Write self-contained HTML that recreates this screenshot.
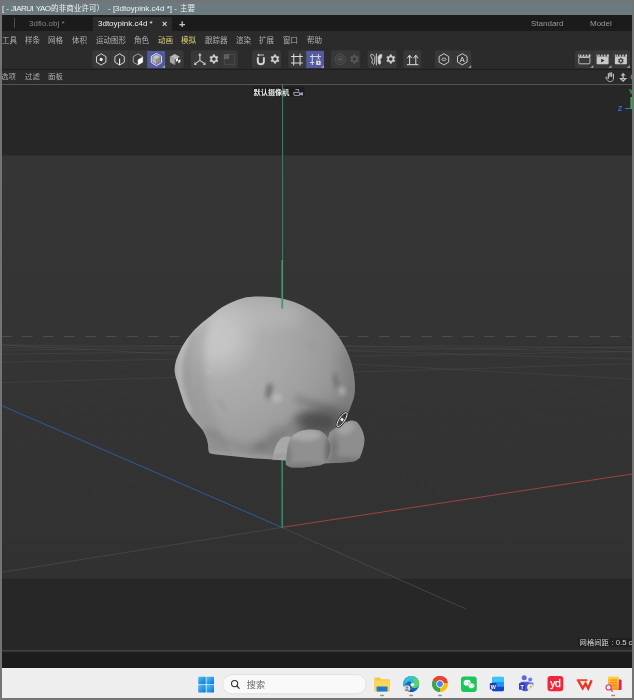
<!DOCTYPE html>
<html lang="zh">
<head>
<meta charset="utf-8">
<title>3dtoypink.c4d</title>
<style>
*{margin:0;padding:0;box-sizing:border-box}
html,body{width:634px;height:700px;overflow:hidden;background:#747474}
body{position:relative;font-family:"Liberation Sans","Noto Sans CJK SC",sans-serif;color:#c8c8c8}
#app{position:absolute;left:2px;top:2px;width:630px;height:696px;overflow:hidden;background:#2b2b2b}
.abs{position:absolute}
.t{position:absolute;white-space:nowrap;line-height:1}
.t,svg{will-change:transform}
#title{left:0;top:0;width:630px;height:13px;background:#6a7a7e}
#tabs{left:0;top:13px;width:630px;height:16px;background:#1b1b1b}
#menu{left:0;top:29px;width:630px;height:18px;background:#2b2b2b}
#menu .t{font-size:7.5px;top:6.2px;color:#b0b0b0}
#menu .y{color:#d9cf74}
#tool{left:0;top:47px;width:630px;height:20px;background:#2b2b2b}
.grp{position:absolute;top:1.5px;height:18px;background:#383838;border-radius:2.5px}
#sep1{left:0;top:67px;width:630px;height:1px;background:#1d1d1d}
#vmenu{left:0;top:68px;width:630px;height:14px;background:#2a2a2a}
#vmenu .t{font-size:7.4px;top:3.4px;color:#adadad}
#vline{left:0;top:82px;width:630px;height:1px;background:#545454}
#view{left:0;top:83px;width:630px;height:565px;background:#272727;overflow:hidden}
#vline2{left:0;top:648px;width:630px;height:3px;background:linear-gradient(#474747,#3a3a3a 35%,#232323 80%,#1c1c1c)}
#dark{left:0;top:651px;width:630px;height:15px;background:#1c1c1c}
#task{left:0;top:666px;width:630px;height:30px;background:#eeeeee}
</style>
</head>
<body>
<div id="app">
<div id="title" class="abs">
<span class="t" id="tt1" style="left:0px;top:2.5px;font-size:8px;letter-spacing:-0.52px;word-spacing:0.9px;color:#f2f2f2">[ - JIARUI YAO</span>
<span class="t" id="tt1b" style="left:48.7px;top:2.5px;font-size:7.6px;color:#f2f2f2">的非商业许可）</span>
<span class="t" id="tt2" style="left:105.5px;top:2.5px;font-size:8px;color:#f2f2f2">- [3dtoypink.c4d *] -</span>
<span class="t" id="tt3" style="left:178px;top:2.5px;font-size:7.6px;color:#f2f2f2">主要</span>
</div>
<div id="tabs" class="abs">
<div class="abs" style="left:12px;top:3px;width:1px;height:10px;background:#4a4a4a"></div>
<span class="t" id="tb1" style="left:27px;top:5.2px;font-size:8px;color:#858585">3dflo.obj *</span>
<div class="abs" style="left:91px;top:1.8px;width:79px;height:14.2px;background:#2b2b2b"></div>
<span class="t" id="tb2" style="left:96.3px;top:5.2px;font-size:8px;color:#f0f0f0">3dtoypink.c4d *</span>
<span class="t" id="tbx" style="left:159.6px;top:5px;font-size:9px;font-weight:bold;color:#dcdcdc">×</span>
<span class="t" id="tbp" style="left:176.8px;top:4px;font-size:11px;font-weight:bold;color:#c8c8c8">+</span>
<span class="t" id="tbs" style="left:528.6px;top:5.2px;font-size:8px;color:#9a9a9a">Standard</span>
<span class="t" id="tbm" style="left:588.2px;top:5.2px;font-size:8px;color:#9a9a9a">Model</span>
</div>
<div id="menu" class="abs">
<span class="t" style="left:0.0px">工具</span>
<span class="t" style="left:22.7px">样条</span>
<span class="t" style="left:46.3px">网格</span>
<span class="t" style="left:69.8px">体积</span>
<span class="t" style="left:93.7px">运动图形</span>
<span class="t" style="left:131.8px">角色</span>
<span class="t y" style="left:155.7px">动画</span>
<span class="t y" style="left:179.3px">模拟</span>
<span class="t" style="left:202.8px">跟踪器</span>
<span class="t" style="left:233.8px">渲染</span>
<span class="t" style="left:257.4px">扩展</span>
<span class="t" style="left:281.0px">窗口</span>
<span class="t" style="left:304.8px">帮助</span>
</div>
<div id="tool" class="abs"></div>
<svg class="abs" style="left:0;top:47px" width="630" height="20" viewBox="2 49 630 20">
<rect x="92.4" y="50.2" width="91.3" height="17.9" rx="2.5" fill="#383838"/>
<rect x="190.9" y="50.2" width="47.0" height="17.9" rx="2.5" fill="#383838"/>
<rect x="252.0" y="50.2" width="29.0" height="17.9" rx="2.5" fill="#383838"/>
<rect x="288.2" y="50.2" width="35.8" height="17.9" rx="2.5" fill="#383838"/>
<rect x="331.0" y="50.2" width="29.2" height="17.9" rx="2.5" fill="#383838"/>
<rect x="367.6" y="50.2" width="29.2" height="17.9" rx="2.5" fill="#383838"/>
<rect x="403.2" y="50.2" width="18.1" height="17.9" rx="2.5" fill="#383838"/>
<rect x="435.0" y="50.2" width="36.3" height="17.9" rx="2.5" fill="#383838"/>
<rect x="575.0" y="50.2" width="55.0" height="17.9" rx="2.5" fill="#383838"/>
<rect x="110.2" y="50.2" width="0.8" height="17.9" fill="#323232"/>
<rect x="128.4" y="50.2" width="0.8" height="17.9" fill="#323232"/>
<rect x="219.4" y="50.2" width="0.8" height="17.9" fill="#323232"/>
<rect x="452.7" y="50.2" width="0.8" height="17.9" fill="#323232"/>
<rect x="593.0" y="50.2" width="0.8" height="17.9" fill="#323232"/>
<rect x="611.2" y="50.2" width="0.8" height="17.9" fill="#323232"/>
<polygon points="101.20,53.80 105.90,56.60 105.90,62.20 101.20,65.00 96.50,62.20 96.50,56.60" fill="none" stroke="#d2d2d2" stroke-width="1.0" stroke-linejoin="round"/>
<circle cx="101.2" cy="59.4" r="1.55" fill="#f4f4f4"/>
<polygon points="119.60,53.80 124.30,56.60 124.30,62.20 119.60,65.00 114.90,62.20 114.90,56.60" fill="none" stroke="#d2d2d2" stroke-width="1.0" stroke-linejoin="round"/>
<line x1="119.6" y1="58.6" x2="119.6" y2="65.0" stroke="#f0f0f0" stroke-width="1.1"/>
<polygon points="138.00,53.80 142.70,56.60 142.70,62.20 138.00,65.00 133.30,62.20 133.30,56.60" fill="none" stroke="#a8a8a8" stroke-width="0.9" stroke-linejoin="round"/>
<polygon points="137.80,59.70 142.70,56.80 142.70,62.20 137.80,65.00" fill="#fafafa"/>
<rect x="147.2" y="51" width="17.9" height="17.2" fill="#545a9f"/>
<polygon points="156.40,53.30 161.50,56.40 161.50,62.60 156.40,65.70 151.30,62.60 151.30,56.40" fill="none" stroke="#f2f2f2" stroke-width="0.9" stroke-linejoin="round"/>
<polygon points="156.40,54.60 160.50,57.05 156.40,59.50 152.30,57.05" fill="#c4c4c4"/>
<polygon points="152.30,57.05 156.40,59.50 156.40,64.40 152.30,61.95" fill="#b4b4b4"/>
<polygon points="160.50,57.05 156.40,59.50 156.40,64.40 160.50,61.95" fill="#8c8c8c"/>
<polygon points="165.10,68.10 165.10,65.10 162.10,68.10" fill="#9c9cb0"/>
<polygon points="174.80,53.90 179.70,56.70 174.80,59.50 169.90,56.70" fill="#b9b9b9"/>
<polygon points="169.90,56.70 174.80,59.50 174.80,65.10 169.90,62.30" fill="#a9a9a9"/>
<polygon points="179.70,56.70 174.80,59.50 174.80,65.10 179.70,62.30" fill="#8d8d8d"/>
<polygon points="175.40,59.70 180.40,57.10 180.40,62.70 175.40,65.50" fill="#383838"/>
<polygon points="176.00,58.90 178.00,57.80 178.00,60.70 176.00,61.80" fill="#f2f2f2"/>
<polygon points="178.20,60.50 180.40,59.30 180.40,62.10 178.20,63.30" fill="#f2f2f2"/>
<g stroke="#d2d2d2" stroke-width="1.05" fill="none" stroke-linecap="round"><path d="M199.9 60.3 V54.7 M199.9 60.3 L195.3 63.7 M199.9 60.3 L204.5 63.7"/></g>
<polygon points="199.90,52.90 201.60,55.50 198.20,55.50" fill="#d2d2d2"/>
<polygon points="194.10,64.90 194.70,62.10 196.90,64.70" fill="#d2d2d2"/>
<polygon points="205.70,64.90 205.10,62.10 202.90,64.70" fill="#d2d2d2"/>
<polygon points="212.93,56.07 213.13,54.77 214.67,54.77 214.87,56.07 216.00,56.72 217.22,56.24 217.99,57.58 216.96,58.40 216.96,59.70 217.99,60.52 217.22,61.86 216.00,61.38 214.87,62.03 214.67,63.33 213.13,63.33 212.93,62.03 211.80,61.38 210.58,61.86 209.81,60.52 210.84,59.70 210.84,58.40 209.81,57.58 210.58,56.24 211.80,56.72" fill="#d2d2d2" stroke="#d2d2d2" stroke-width="0.5" stroke-linejoin="round"/><circle cx="213.90" cy="59.05" r="1.83" fill="#383838"/>
<rect x="224.3" y="54.6" width="10" height="9.8" fill="none" stroke="#4c4c4c" stroke-width="0.9"/>
<rect x="223.9" y="54.2" width="5.2" height="4.8" fill="#606060"/>
<path d="M257.8 57.2 V61.2 A3.05 3.05 0 0 0 263.9 61.2 V57.2" fill="none" stroke="#d2d2d2" stroke-width="1.9"/>
<path d="M258.4 55 H264.0" stroke="#d2d2d2" stroke-width="0.9"/>
<polygon points="257.20,55.00 259.20,53.60 259.20,56.40" fill="#d2d2d2"/>
<polygon points="274.03,56.07 274.23,54.77 275.77,54.77 275.97,56.07 277.10,56.72 278.32,56.24 279.09,57.58 278.06,58.40 278.06,59.70 279.09,60.52 278.32,61.86 277.10,61.38 275.97,62.03 275.77,63.33 274.23,63.33 274.03,62.03 272.90,61.38 271.68,61.86 270.91,60.52 271.94,59.70 271.94,58.40 270.91,57.58 271.68,56.24 272.90,56.72" fill="#d2d2d2" stroke="#d2d2d2" stroke-width="0.5" stroke-linejoin="round"/><circle cx="275.00" cy="59.05" r="1.83" fill="#383838"/>
<g stroke="#d8d8d8" stroke-width="1.05" fill="none"><path d="M293.7 53.8 V65.6 M300.1 53.8 V65.6 M291.0 56.5 H302.8 M291.0 62.9 H302.8"/></g>
<rect x="306.2" y="51" width="17.8" height="17.1" fill="#545a9f"/>
<g stroke="#d6d6d6" stroke-width="1.05" fill="none"><path d="M312.3 53.9 V64.9 M318.4 53.9 V58.8 M309.9 56.4 H320.9 M309.9 62.4 H314.2"/></g>
<rect x="316.1" y="60.9" width="4.6" height="4" rx="0.4" fill="#d8d8d8"/>
<path d="M317.2 60.9 V59.4 A1.2 1.2 0 0 1 319.6 59.4 V60.9" fill="none" stroke="#c4c4d4" stroke-width="0.7"/>
<rect x="318" y="62" width="0.9" height="1.8" fill="#545a9f"/>
<polygon points="324.00,68.10 324.00,65.10 321.00,68.10" fill="#9c9cb0"/>
<circle cx="340.2" cy="59.3" r="1.5" fill="#555" stroke="#555555" stroke-width="0.8"/>
<circle cx="340.2" cy="59.3" r="3.3" fill="none" stroke="#555555" stroke-width="0.8"/>
<circle cx="340.2" cy="59.3" r="5.3" fill="none" stroke="#555555" stroke-width="0.8"/>
<polygon points="353.43,56.07 353.63,54.77 355.17,54.77 355.37,56.07 356.50,56.72 357.72,56.24 358.49,57.58 357.46,58.40 357.46,59.70 358.49,60.52 357.72,61.86 356.50,61.38 355.37,62.03 355.17,63.33 353.63,63.33 353.43,62.03 352.30,61.38 351.08,61.86 350.31,60.52 351.34,59.70 351.34,58.40 350.31,57.58 351.08,56.24 352.30,56.72" fill="#585858" stroke="#585858" stroke-width="0.5" stroke-linejoin="round"/><circle cx="354.40" cy="59.05" r="1.83" fill="#383838"/>
<line x1="376.4" y1="53.4" x2="376.4" y2="65.4" stroke="#d2d2d2" stroke-width="0.9"/>
<path d="M374.8 56.6 C373.2 54.2,370.8 53.6,370.8 55 C370.8 57.4,372.0 59,373.0 59.6 C371.8 60.4,371.6 63.6,373.0 64.2 C374.2 64.8,374.8 62.5,374.8 60.2 Z" fill="none" stroke="#d2d2d2" stroke-width="0.9"/>
<path d="M378.0 56.6 C379.6 54.2,382.0 53.6,382.0 55 C382.0 57.4,380.8 59,379.8 59.6 C381.0 60.4,381.2 63.6,379.8 64.2 C378.6 64.8,378.0 62.5,378.0 60.2 Z" fill="#d2d2d2" stroke="#d2d2d2" stroke-width="0.6"/>
<polygon points="389.83,56.07 390.03,54.77 391.57,54.77 391.77,56.07 392.90,56.72 394.12,56.24 394.89,57.58 393.86,58.40 393.86,59.70 394.89,60.52 394.12,61.86 392.90,61.38 391.77,62.03 391.57,63.33 390.03,63.33 389.83,62.03 388.70,61.38 387.48,61.86 386.71,60.52 387.74,59.70 387.74,58.40 386.71,57.58 387.48,56.24 388.70,56.72" fill="#d2d2d2" stroke="#d2d2d2" stroke-width="0.5" stroke-linejoin="round"/><circle cx="390.80" cy="59.05" r="1.83" fill="#383838"/>
<path d="M409.6 64.4 V55.4 M407.3 58.2 L409.6 55.2 L411.9 58.2" fill="none" stroke="#dedede" stroke-width="1.0"/>
<path d="M415.8 64.4 V55.4 M413.5 58.2 L415.8 55.2 L418.1 58.2" fill="none" stroke="#dedede" stroke-width="1.0"/>
<path d="M406.9 64.7 H418.4" stroke="#dedede" stroke-width="1.0"/>
<polygon points="443.90,53.70 448.70,56.50 448.70,62.10 443.90,64.90 439.10,62.10 439.10,56.50" fill="none" stroke="#d8d8d8" stroke-width="0.9" stroke-linejoin="round"/>
<ellipse cx="443.9" cy="59.3" rx="2.2" ry="1.2" fill="none" stroke="#cfcfcf" stroke-width="0.8"/>
<polygon points="462.30,53.70 467.10,56.50 467.10,62.10 462.30,64.90 457.50,62.10 457.50,56.50" fill="none" stroke="#d8d8d8" stroke-width="0.9" stroke-linejoin="round"/>
<text x="462.3" y="62" font-size="7.4" text-anchor="middle" fill="#e2e2e2" font-family="Liberation Sans, sans-serif">A</text>
<polygon points="471.20,68.10 471.20,65.10 468.20,68.10" fill="#9a9a9a"/>
<path d="M578.7 54.4 V57.0 H589.9 V54.4" fill="none" stroke="#cdcdcd" stroke-width="0.9"/><rect x="579.9" y="54.6" width="1.5" height="2" fill="#cdcdcd"/><rect x="582.8" y="54.6" width="1.5" height="2" fill="#cdcdcd"/><rect x="585.7" y="54.6" width="1.5" height="2" fill="#cdcdcd"/><rect x="588.6" y="54.6" width="1.5" height="2" fill="#cdcdcd"/><rect x="578.8" y="57.4" width="11.1" height="6.4" rx="0.9" fill="none" stroke="#cdcdcd" stroke-width="0.9"/>
<polygon points="593.30,68.10 593.30,65.00 590.20,68.10" fill="#9a9a9a"/>
<path d="M597.0 54.4 V57.0 H608.2 V54.4" fill="none" stroke="#cdcdcd" stroke-width="0.9"/><rect x="598.2" y="54.6" width="1.5" height="2" fill="#cdcdcd"/><rect x="601.1" y="54.6" width="1.5" height="2" fill="#cdcdcd"/><rect x="604.0" y="54.6" width="1.5" height="2" fill="#cdcdcd"/><rect x="606.9" y="54.6" width="1.5" height="2" fill="#cdcdcd"/><rect x="596.6" y="57.0" width="12.0" height="7.2" rx="0.8" fill="#c9c9c9"/>
<polygon points="601.2,58.8 601.2,62.4 604.6,60.6" fill="#2f2f2f"/>
<polygon points="611.50,68.10 611.50,65.00 608.40,68.10" fill="#9a9a9a"/>
<path d="M615.3 54.4 V57.0 H626.5 V54.4" fill="none" stroke="#cdcdcd" stroke-width="0.9"/><rect x="616.5" y="54.6" width="1.5" height="2" fill="#cdcdcd"/><rect x="619.4" y="54.6" width="1.5" height="2" fill="#cdcdcd"/><rect x="622.3" y="54.6" width="1.5" height="2" fill="#cdcdcd"/><rect x="625.2" y="54.6" width="1.5" height="2" fill="#cdcdcd"/><rect x="614.9" y="57.0" width="12.0" height="7.2" rx="0.8" fill="#c9c9c9"/>
<polygon points="620.32,58.92 620.44,58.14 621.36,58.14 621.48,58.92 622.15,59.31 622.89,59.02 623.35,59.82 622.73,60.31 622.73,61.09 623.35,61.58 622.89,62.38 622.15,62.09 621.48,62.48 621.36,63.26 620.44,63.26 620.32,62.48 619.65,62.09 618.91,62.38 618.45,61.58 619.07,61.09 619.07,60.31 618.45,59.82 618.91,59.02 619.65,59.31" fill="#2f2f2f" stroke="#2f2f2f" stroke-width="0.5" stroke-linejoin="round"/><circle cx="620.90" cy="60.70" r="1.09" fill="#c9c9c9"/>
<polygon points="629.90,68.10 629.90,65.00 626.80,68.10" fill="#9a9a9a"/>
</svg>
<div id="sep1" class="abs"></div>
<div id="vmenu" class="abs">
<span class="t" style="left:-1px">选项</span><span class="t" style="left:22.5px">过滤</span><span class="t" style="left:46px">面板</span>
<svg class="abs" style="left:0;top:0" width="630" height="14" viewBox="2 70 630 14">
<g fill="none" stroke="#bcbcbc" stroke-width="0.95" stroke-linejoin="round" stroke-linecap="round">
<path d="M608.4 77.4 V73.6 M610 76.6 V72.7 M611.6 76.6 V72.7 M613.4 77.4 V74.2"/>
<path d="M613.5 74.4 V78.2 c0 2.2 -1.4 3.4 -3.2 3.4 c-1.4 0 -2.4 -0.6 -3.2 -1.8 l-1.5 -2.3 c0.7 -0.6 1.5 -0.3 2 0.4 l0.8 1 V73.8"/>
</g>
<path d="M609.2 72.8 h3 v3.4 h-3 Z" fill="#bcbcbc" opacity="0.6"/>
<g fill="#bcbcbc">
<polygon points="623.1,72.8 625.6,75.4 620.6,75.4"/>
<rect x="622.4" y="75" width="1.4" height="4"/>
<polygon points="619,77.9 627.2,77.9 623.1,81.9"/>
</g>
<circle cx="623.1" cy="79.3" r="0.6" fill="#2a2a2a"/>
<circle cx="633.4" cy="77" r="2.4" fill="none" stroke="#9a9a9a" stroke-width="0.9"/>
</svg>
</div>
<div id="vline" class="abs"></div>
<div id="view" class="abs">
<svg class="abs" style="left:0;top:0" width="630" height="565" viewBox="2 85 630 565">
<defs>
<linearGradient id="frameg" x1="0" y1="155.5" x2="0" y2="578.7" gradientUnits="userSpaceOnUse">
<stop offset="0" stop-color="#353535"/><stop offset="0.44" stop-color="#343434"/><stop offset="0.7" stop-color="#333333"/><stop offset="1" stop-color="#313131"/>
</linearGradient>
<radialGradient id="bodyg" cx="216" cy="336" r="152" gradientUnits="userSpaceOnUse">
<stop offset="0" stop-color="#c6c6c6"/><stop offset="0.12" stop-color="#c3c3c3"/><stop offset="0.3" stop-color="#adadad"/><stop offset="0.5" stop-color="#a6a6a6"/><stop offset="0.7" stop-color="#9d9d9d"/><stop offset="0.85" stop-color="#939393"/><stop offset="1" stop-color="#868686"/>
</radialGradient>
<linearGradient id="footg" x1="290" y1="430" x2="330" y2="468" gradientUnits="userSpaceOnUse">
<stop offset="0" stop-color="#aaaaaa"/><stop offset="0.5" stop-color="#929292"/><stop offset="1" stop-color="#6c6c6c"/>
</linearGradient>
<linearGradient id="foot2g" x1="335" y1="422" x2="364" y2="462" gradientUnits="userSpaceOnUse">
<stop offset="0" stop-color="#a6a6a6"/><stop offset="0.5" stop-color="#8e8e8e"/><stop offset="1" stop-color="#6a6a6a"/>
</linearGradient>
<filter id="b2" x="-50%" y="-50%" width="200%" height="200%"><feGaussianBlur stdDeviation="2"/></filter>
<filter id="b3" x="-50%" y="-50%" width="200%" height="200%"><feGaussianBlur stdDeviation="3.5"/></filter>
<filter id="b6" x="-50%" y="-50%" width="200%" height="200%"><feGaussianBlur stdDeviation="7"/></filter>
<filter id="b05" x="-20%" y="-20%" width="140%" height="140%"><feGaussianBlur stdDeviation="0.7"/></filter>
<clipPath id="bodyclip"><path id="bodyp" d="M282.0,298.6 C286.7,299.8 293.6,301.6 299.0,303.9 C304.4,306.2 309.4,309.1 314.2,312.4 C318.9,315.7 323.4,319.7 327.5,323.8 C331.6,327.9 335.7,332.6 338.8,337.0 C341.9,341.4 344.3,346.0 346.4,350.3 C348.4,354.6 349.9,358.7 351.1,362.6 C352.3,366.6 353.2,370.3 353.8,374.0 C354.4,377.7 354.8,381.3 354.9,385.0 C355.0,388.7 354.8,392.8 354.2,396.0 C353.6,399.2 352.5,401.7 351.5,404.5 C350.5,407.3 349.2,410.2 348.3,412.6 C347.4,415.1 347.8,414.6 346.4,419.2 C345.0,423.8 344.4,434.0 340.0,440.0 C335.6,446.0 328.0,451.6 320.0,455.0 C312.0,458.4 297.8,459.6 292.0,460.4 C286.2,461.2 288.8,459.8 285.0,459.6 C281.2,459.4 274.9,459.6 269.1,459.3 C263.3,459.0 256.5,458.5 250.2,458.0 C243.9,457.5 237.5,456.8 231.3,456.1 C225.1,455.4 216.8,454.8 213.0,454.0 C209.2,453.2 209.7,453.6 208.8,451.6 C207.9,449.6 208.6,445.4 207.6,441.9 C206.6,438.4 205.3,434.4 202.9,430.6 C200.5,426.8 196.2,423.0 193.4,419.2 C190.6,415.4 187.9,412.0 185.8,407.9 C183.8,403.8 182.5,398.8 181.1,394.6 C179.7,390.5 178.5,386.1 177.6,383.0 C176.7,379.9 175.9,378.2 175.4,376.0 C174.9,373.8 174.6,371.8 174.6,369.5 C174.6,367.2 175.0,364.9 175.6,362.5 C176.2,360.1 176.8,358.1 178.2,355.0 C179.6,351.9 181.7,347.3 183.9,343.7 C186.1,340.1 188.7,336.6 191.5,333.3 C194.3,330.0 197.8,326.7 201.0,323.8 C204.2,320.9 207.2,318.7 210.4,316.2 C213.6,313.7 216.4,311.0 219.9,308.7 C223.4,306.4 226.8,304.3 231.2,302.4 C235.6,300.5 241.7,298.3 246.4,297.3 C251.1,296.3 255.5,296.4 259.6,296.4 C263.7,296.3 267.3,296.6 271.0,297.0 C274.7,297.4 277.3,297.5 282.0,298.6 Z"/></clipPath>
<clipPath id="viewclip"><rect x="2" y="85" width="630" height="565"/></clipPath>
<clipPath id="gridclip"><polygon points="2,344.2 632,345.8 632,650 2,650"/></clipPath>
<clipPath id="frameclip"><rect x="2" y="155.5" width="630" height="423.2"/></clipPath>
</defs>
<rect x="2" y="85" width="630" height="565" fill="#272727"/>
<rect x="2" y="155.5" width="630" height="423.2" fill="url(#frameg)"/>
<line x1="1.1" y1="336.4" x2="634" y2="336.4" stroke="#545454" stroke-width="0.9" stroke-dasharray="10.5 10.5"/>
<g clip-path="url(#gridclip)" stroke="#8a8a8a" stroke-width="0.8" fill="none">
<line x1="-117.5" y1="386.3" x2="1090.1" y2="349.8" stroke-opacity="0.170"/>
<line x1="1228.6" y1="411.3" x2="-8.7" y2="344.4" stroke-opacity="0.170"/>
<line x1="-134.8" y1="364.4" x2="873.2" y2="347.5" stroke-opacity="0.170"/>
<line x1="1356.2" y1="380.0" x2="101.3" y2="343.8" stroke-opacity="0.170"/>
<line x1="-141.6" y1="355.8" x2="720.5" y2="345.8" stroke-opacity="0.170"/>
<line x1="1408.6" y1="367.2" x2="196.7" y2="343.3" stroke-opacity="0.170"/>
<line x1="-145.2" y1="351.3" x2="607.3" y2="344.6" stroke-opacity="0.170"/>
<line x1="1437.1" y1="360.2" x2="280.1" y2="342.9" stroke-opacity="0.170"/>
<line x1="-147.4" y1="348.5" x2="519.9" y2="343.7" stroke-opacity="0.170"/>
<line x1="1455.1" y1="355.8" x2="353.8" y2="342.5" stroke-opacity="0.170"/>
<line x1="-149.0" y1="346.5" x2="450.5" y2="342.9" stroke-opacity="0.170"/>
<line x1="-150.1" y1="345.1" x2="394.0" y2="342.3" stroke-opacity="0.170"/>
<line x1="-23.1" y1="505.4" x2="1381.6" y2="352.9" stroke-opacity="0.030"/>
<line x1="671.6" y1="547.9" x2="-123.3" y2="345.0" stroke-opacity="0.030"/>
<line x1="-51.2" y1="470.0" x2="1342.7" y2="352.5" stroke-opacity="0.030"/>
<line x1="816.9" y1="512.3" x2="-109.7" y2="344.9" stroke-opacity="0.030"/>
<line x1="-69.5" y1="446.8" x2="1305.6" y2="352.1" stroke-opacity="0.030"/>
<line x1="920.4" y1="486.9" x2="-96.4" y2="344.9" stroke-opacity="0.030"/>
<line x1="-82.5" y1="430.5" x2="1270.4" y2="351.7" stroke-opacity="0.030"/>
<line x1="997.7" y1="467.9" x2="-83.2" y2="344.8" stroke-opacity="0.030"/>
<line x1="-92.1" y1="418.4" x2="1236.8" y2="351.4" stroke-opacity="0.030"/>
<line x1="1057.7" y1="453.2" x2="-70.3" y2="344.7" stroke-opacity="0.030"/>
<line x1="-99.5" y1="409.0" x2="1204.8" y2="351.0" stroke-opacity="0.030"/>
<line x1="1105.7" y1="441.5" x2="-57.6" y2="344.7" stroke-opacity="0.030"/>
<line x1="-105.4" y1="401.6" x2="1174.1" y2="350.7" stroke-opacity="0.030"/>
<line x1="1144.8" y1="431.9" x2="-45.1" y2="344.6" stroke-opacity="0.030"/>
<line x1="-110.1" y1="395.5" x2="1144.9" y2="350.4" stroke-opacity="0.030"/>
<line x1="1177.4" y1="423.9" x2="-32.8" y2="344.5" stroke-opacity="0.030"/>
<line x1="-114.1" y1="390.5" x2="1116.9" y2="350.1" stroke-opacity="0.030"/>
<line x1="1205.0" y1="417.1" x2="-20.7" y2="344.5" stroke-opacity="0.030"/>
<line x1="-120.4" y1="382.6" x2="1064.3" y2="349.5" stroke-opacity="0.030"/>
<line x1="1249.1" y1="406.3" x2="3.0" y2="344.4" stroke-opacity="0.030"/>
<line x1="-122.8" y1="379.5" x2="1039.7" y2="349.3" stroke-opacity="0.030"/>
<line x1="1266.9" y1="401.9" x2="14.6" y2="344.3" stroke-opacity="0.030"/>
<line x1="-125.0" y1="376.8" x2="1016.0" y2="349.0" stroke-opacity="0.030"/>
<line x1="1282.7" y1="398.0" x2="26.0" y2="344.2" stroke-opacity="0.030"/>
<line x1="-126.9" y1="374.4" x2="993.2" y2="348.8" stroke-opacity="0.030"/>
<line x1="1296.7" y1="394.6" x2="37.2" y2="344.2" stroke-opacity="0.030"/>
<line x1="-128.6" y1="372.2" x2="971.3" y2="348.5" stroke-opacity="0.030"/>
<line x1="1309.3" y1="391.5" x2="48.3" y2="344.1" stroke-opacity="0.030"/>
<line x1="-130.1" y1="370.3" x2="950.2" y2="348.3" stroke-opacity="0.030"/>
<line x1="1320.5" y1="388.8" x2="59.2" y2="344.1" stroke-opacity="0.030"/>
<line x1="-131.5" y1="368.6" x2="929.9" y2="348.1" stroke-opacity="0.030"/>
<line x1="1330.7" y1="386.3" x2="70.0" y2="344.0" stroke-opacity="0.030"/>
<line x1="-132.7" y1="367.1" x2="910.3" y2="347.9" stroke-opacity="0.030"/>
<line x1="1340.0" y1="384.0" x2="80.6" y2="344.0" stroke-opacity="0.030"/>
<line x1="-133.8" y1="365.6" x2="891.4" y2="347.7" stroke-opacity="0.030"/>
<line x1="1348.5" y1="381.9" x2="91.0" y2="343.9" stroke-opacity="0.030"/>
<line x1="-135.8" y1="363.2" x2="855.5" y2="347.3" stroke-opacity="0.030"/>
<line x1="1363.3" y1="378.3" x2="111.4" y2="343.8" stroke-opacity="0.030"/>
<line x1="-136.6" y1="362.1" x2="838.5" y2="347.1" stroke-opacity="0.030"/>
<line x1="1369.9" y1="376.6" x2="121.4" y2="343.7" stroke-opacity="0.030"/>
<line x1="-137.4" y1="361.1" x2="822.1" y2="346.9" stroke-opacity="0.030"/>
<line x1="1376.0" y1="375.2" x2="131.3" y2="343.7" stroke-opacity="0.030"/>
<line x1="-138.2" y1="360.2" x2="806.1" y2="346.8" stroke-opacity="0.030"/>
<line x1="1381.7" y1="373.8" x2="141.0" y2="343.6" stroke-opacity="0.030"/>
<line x1="-138.8" y1="359.3" x2="790.7" y2="346.6" stroke-opacity="0.030"/>
<line x1="1386.9" y1="372.5" x2="150.6" y2="343.6" stroke-opacity="0.030"/>
<line x1="-139.5" y1="358.5" x2="775.8" y2="346.4" stroke-opacity="0.030"/>
<line x1="1391.8" y1="371.3" x2="160.1" y2="343.5" stroke-opacity="0.030"/>
<line x1="-140.1" y1="357.8" x2="761.3" y2="346.3" stroke-opacity="0.030"/>
<line x1="1396.4" y1="370.1" x2="169.4" y2="343.5" stroke-opacity="0.030"/>
<line x1="-140.6" y1="357.1" x2="747.3" y2="346.1" stroke-opacity="0.030"/>
<line x1="1400.7" y1="369.1" x2="178.6" y2="343.4" stroke-opacity="0.030"/>
<line x1="-141.1" y1="356.4" x2="733.7" y2="346.0" stroke-opacity="0.030"/>
<line x1="1404.8" y1="368.1" x2="187.7" y2="343.4" stroke-opacity="0.030"/>
<line x1="-142.1" y1="355.3" x2="707.7" y2="345.7" stroke-opacity="0.030"/>
<line x1="1412.2" y1="366.3" x2="205.5" y2="343.3" stroke-opacity="0.030"/>
<line x1="-142.5" y1="354.7" x2="695.3" y2="345.6" stroke-opacity="0.030"/>
<line x1="1415.6" y1="365.4" x2="214.2" y2="343.3" stroke-opacity="0.030"/>
<line x1="-142.9" y1="354.2" x2="683.2" y2="345.4" stroke-opacity="0.030"/>
<line x1="1418.8" y1="364.7" x2="222.9" y2="343.2" stroke-opacity="0.030"/>
<line x1="-143.3" y1="353.7" x2="671.4" y2="345.3" stroke-opacity="0.030"/>
<line x1="1421.8" y1="363.9" x2="231.4" y2="343.2" stroke-opacity="0.030"/>
<line x1="-143.6" y1="353.3" x2="660.0" y2="345.2" stroke-opacity="0.030"/>
<line x1="1424.7" y1="363.2" x2="239.7" y2="343.1" stroke-opacity="0.030"/>
<line x1="-144.0" y1="352.8" x2="648.9" y2="345.1" stroke-opacity="0.030"/>
<line x1="1427.4" y1="362.5" x2="248.0" y2="343.1" stroke-opacity="0.030"/>
<line x1="-144.3" y1="352.4" x2="638.1" y2="344.9" stroke-opacity="0.030"/>
<line x1="1430.0" y1="361.9" x2="256.2" y2="343.0" stroke-opacity="0.030"/>
<line x1="-144.6" y1="352.0" x2="627.5" y2="344.8" stroke-opacity="0.030"/>
<line x1="1432.5" y1="361.3" x2="264.3" y2="343.0" stroke-opacity="0.030"/>
<line x1="-144.9" y1="351.6" x2="617.3" y2="344.7" stroke-opacity="0.030"/>
<line x1="1434.9" y1="360.7" x2="272.3" y2="343.0" stroke-opacity="0.030"/>
<line x1="-145.5" y1="350.9" x2="597.6" y2="344.5" stroke-opacity="0.030"/>
<line x1="1439.3" y1="359.6" x2="287.9" y2="342.9" stroke-opacity="0.030"/>
<line x1="-145.7" y1="350.6" x2="588.1" y2="344.4" stroke-opacity="0.030"/>
<line x1="1441.4" y1="359.1" x2="295.6" y2="342.8" stroke-opacity="0.030"/>
<line x1="-146.0" y1="350.3" x2="578.8" y2="344.3" stroke-opacity="0.030"/>
<line x1="1443.3" y1="358.6" x2="303.2" y2="342.8" stroke-opacity="0.030"/>
<line x1="-146.2" y1="350.0" x2="569.8" y2="344.2" stroke-opacity="0.030"/>
<line x1="1445.2" y1="358.2" x2="310.7" y2="342.8" stroke-opacity="0.030"/>
<line x1="-146.4" y1="349.7" x2="561.0" y2="344.1" stroke-opacity="0.030"/>
<line x1="1447.0" y1="357.7" x2="318.1" y2="342.7" stroke-opacity="0.030"/>
<line x1="-146.7" y1="349.5" x2="552.4" y2="344.0" stroke-opacity="0.030"/>
<line x1="1448.8" y1="357.3" x2="325.4" y2="342.7" stroke-opacity="0.030"/>
<line x1="-146.9" y1="349.2" x2="544.0" y2="343.9" stroke-opacity="0.030"/>
<line x1="1450.5" y1="356.9" x2="332.6" y2="342.6" stroke-opacity="0.030"/>
<line x1="-147.1" y1="348.9" x2="535.8" y2="343.8" stroke-opacity="0.030"/>
<line x1="1452.1" y1="356.5" x2="339.8" y2="342.6" stroke-opacity="0.030"/>
<line x1="-147.3" y1="348.7" x2="527.8" y2="343.8" stroke-opacity="0.030"/>
<line x1="1453.6" y1="356.1" x2="346.8" y2="342.6" stroke-opacity="0.030"/>
<line x1="-147.6" y1="348.2" x2="512.3" y2="343.6" stroke-opacity="0.030"/>
<line x1="1456.5" y1="355.4" x2="360.7" y2="342.5" stroke-opacity="0.030"/>
<line x1="-147.8" y1="348.0" x2="504.8" y2="343.5" stroke-opacity="0.030"/>
<line x1="1457.9" y1="355.1" x2="367.5" y2="342.5" stroke-opacity="0.030"/>
<line x1="-148.0" y1="347.8" x2="497.5" y2="343.4" stroke-opacity="0.030"/>
<line x1="1459.3" y1="354.7" x2="374.2" y2="342.4" stroke-opacity="0.030"/>
<line x1="-148.1" y1="347.6" x2="490.3" y2="343.4" stroke-opacity="0.030"/>
<line x1="1460.5" y1="354.4" x2="380.9" y2="342.4" stroke-opacity="0.030"/>
<line x1="-148.3" y1="347.4" x2="483.3" y2="343.3" stroke-opacity="0.030"/>
<line x1="1461.8" y1="354.1" x2="387.5" y2="342.4" stroke-opacity="0.030"/>
<line x1="-148.4" y1="347.2" x2="476.5" y2="343.2" stroke-opacity="0.030"/>
<line x1="1463.0" y1="353.8" x2="394.0" y2="342.3" stroke-opacity="0.030"/>
<line x1="-148.6" y1="347.1" x2="469.8" y2="343.1" stroke-opacity="0.030"/>
<line x1="-148.7" y1="346.9" x2="463.2" y2="343.1" stroke-opacity="0.030"/>
<line x1="-148.8" y1="346.7" x2="456.8" y2="343.0" stroke-opacity="0.030"/>
<line x1="-149.1" y1="346.4" x2="444.3" y2="342.9" stroke-opacity="0.030"/>
<line x1="-149.2" y1="346.2" x2="438.3" y2="342.8" stroke-opacity="0.030"/>
<line x1="-149.3" y1="346.1" x2="432.4" y2="342.7" stroke-opacity="0.030"/>
<line x1="-149.4" y1="345.9" x2="426.6" y2="342.7" stroke-opacity="0.030"/>
<line x1="-149.6" y1="345.8" x2="420.9" y2="342.6" stroke-opacity="0.030"/>
<line x1="-149.7" y1="345.7" x2="415.3" y2="342.6" stroke-opacity="0.030"/>
<line x1="-149.8" y1="345.5" x2="409.8" y2="342.5" stroke-opacity="0.030"/>
<line x1="-149.9" y1="345.4" x2="404.4" y2="342.4" stroke-opacity="0.030"/>
<line x1="-150.0" y1="345.3" x2="399.2" y2="342.4" stroke-opacity="0.030"/>
</g>
<line x1="281.8" y1="527.4" x2="2" y2="572.3" stroke="#4c4848" stroke-width="0.8"/>
<line x1="281.8" y1="527.4" x2="466" y2="609" stroke="#4c4c4c" stroke-width="0.8"/>
<line x1="281.8" y1="527.4" x2="2" y2="405.7" stroke="#2d5b9f" stroke-width="1"/>
<line x1="281.8" y1="527.4" x2="632" y2="474" stroke="#9e4242" stroke-width="1"/>
<line x1="282.6" y1="85" x2="282.6" y2="262" stroke="#2f8f63" stroke-width="1"/><rect x="281.3" y="460" width="1.8" height="67.8" fill="#2f8658"/>
<g filter="url(#b05)">
<use href="#bodyp" fill="url(#bodyg)"/>
<g clip-path="url(#bodyclip)">
<ellipse cx="351" cy="378" rx="10" ry="46" fill="#707070" opacity="0.45" filter="url(#b6)"/>
<ellipse cx="322" cy="426" rx="27" ry="17" fill="#505050" opacity="0.7" filter="url(#b6)" transform="rotate(-20 322 426)"/>
<ellipse cx="274" cy="448" rx="20" ry="7" fill="#767676" opacity="0.45" filter="url(#b3)"/>
<path d="M212,312 C204,330 203,352 204,374 C206,396 212,414 222,428 L204,430 C194,418 187,404 184,388 C181,370 184,350 192,334 Z" fill="#8f8f8f" opacity="0.42" filter="url(#b3)"/>
<path d="M194,331 C188,344 186,360 186.5,374 C187,390 191,404 198,418" fill="none" stroke="#8a8a8a" stroke-width="1.6" opacity="0.5" filter="url(#b2)"/>
<path d="M188,336 C181,350 178.5,362 179,374 C180,388 184,400 190,412" fill="none" stroke="#d0d0d0" stroke-width="3.5" opacity="0.45" filter="url(#b2)"/>
<ellipse cx="209.5" cy="372" rx="2.4" ry="3.2" fill="#cccccc" opacity="0.35" filter="url(#b2)"/>
<path d="M218,399 L226,411" fill="none" stroke="#8c8c8c" stroke-width="2" opacity="0.6" filter="url(#b2)"/>
<path d="M203,428 C207,436 208.5,444 209,452 L232,455 C228,446 224,438 218,430 Z" fill="#8a8a8a" opacity="0.5" filter="url(#b2)"/>
<path d="M210,452.5 L250,457 L285,458.6" fill="none" stroke="#b4b4b4" stroke-width="2" opacity="0.6" filter="url(#b2)"/>
<ellipse cx="316" cy="421" rx="20" ry="9" fill="#444" opacity="0.65" filter="url(#b3)" transform="rotate(8 316 421)"/>
<ellipse cx="278" cy="438" rx="11" ry="12" fill="#7a7a7a" opacity="0.4" filter="url(#b3)"/>
<ellipse cx="264" cy="316" rx="40" ry="13" fill="#c2c2c2" opacity="0.4" filter="url(#b6)"/>
<path d="M302,416 C288,431 272,442 252,448" fill="none" stroke="#6c6c6c" stroke-width="6" opacity="0.5" filter="url(#b3)"/>
<path d="M205,430 C219,441 238,447 258,450" fill="none" stroke="#7a7a7a" stroke-width="7" opacity="0.45" filter="url(#b3)"/>
<ellipse cx="269" cy="391" rx="3" ry="8" fill="#666" opacity="0.8" filter="url(#b2)" transform="rotate(12 269 391)"/>
<ellipse cx="277" cy="398" rx="5" ry="4.5" fill="#c2c2c2" opacity="0.6" filter="url(#b2)"/>
<ellipse cx="336" cy="381" rx="2.4" ry="8" fill="#6c6c6c" opacity="0.75" filter="url(#b2)" transform="rotate(-14 336 381)"/>
<ellipse cx="342" cy="391" rx="3.5" ry="5" fill="#b8b8b8" opacity="0.7" filter="url(#b2)"/>
<ellipse cx="312" cy="346" rx="5" ry="3.5" fill="#969696" opacity="0.45" filter="url(#b2)" transform="rotate(35 312 346)"/>
<path d="M296,398 C310,404 326,408 344,414" fill="none" stroke="#5a5a5a" stroke-width="5" opacity="0.55" filter="url(#b3)"/>
<ellipse cx="262" cy="447" rx="4" ry="2.5" fill="#777" opacity="0.6" filter="url(#b2)"/>
</g>
<clipPath id="rfclip"><path d="M329.4,432.5 C333,429 337,426.6 340.7,424.9 C344,423 347,421.6 350.2,420.7 C352.6,420.4 355,421 356.8,422 C358.8,424 360.4,426.2 361.5,428.7 C363,431.6 364,434.8 364.4,438.1 C364.6,441.4 364.2,444.6 363.4,447.6 C362.4,451.4 361.2,455 359.6,458 C357.6,460 355,461.2 352.1,461.8 L340.7,462.7 L322,463.4 Z"/></clipPath>
<path d="M329.4,432.5 C333,429 337,426.6 340.7,424.9 C344,423 347,421.6 350.2,420.7 C352.6,420.4 355,421 356.8,422 C358.8,424 360.4,426.2 361.5,428.7 C363,431.6 364,434.8 364.4,438.1 C364.6,441.4 364.2,444.6 363.4,447.6 C362.4,451.4 361.2,455 359.6,458 C357.6,460 355,461.2 352.1,461.8 L340.7,462.7 L322,463.4 Z" fill="#8e8e8e"/>
<g clip-path="url(#rfclip)">
<ellipse cx="346" cy="428" rx="9" ry="6" fill="#a8a8a8" opacity="0.8" filter="url(#b2)" transform="rotate(-25 346 428)"/>
<ellipse cx="345" cy="461" rx="18" ry="4.5" fill="#6a6a6a" opacity="0.6" filter="url(#b2)"/>
<ellipse cx="334" cy="448" rx="4" ry="11" fill="#626262" opacity="0.5" filter="url(#b2)"/>
</g>
<path d="M272.5,459.4 C273.5,451 276,443 281,438.4 C285,435.6 290,436 292,438 L292,461 Z" fill="#a8a8a8"/><path d="M273,459 C276,456 282,455 290,456" fill="none" stroke="#8a8a8a" stroke-width="3" opacity="0.6" filter="url(#b2)"/>
<clipPath id="ffclip"><path d="M287.7,445.7 C288.4,443 289.4,440.4 290.6,438.1 C292.4,435.8 294.6,434 297.2,432.5 C300.8,431 304.6,430 308.5,429.6 C312.4,429.4 316.2,429.8 319.9,430.6 C322.6,432 324.8,433.8 326.5,436.2 C328.4,439.2 329.6,442.4 330.3,445.7 C330.6,448.6 330.2,451.6 329.4,454.2 C328.6,457.4 327.4,460.2 325.6,462.7 C323.4,464.2 320.8,465.2 318,465.6 L302.9,467.5 L291.5,467.5 C289.2,467 287.2,466 285.8,464.6 C285.6,460.8 286,457 286.8,453.3 Z"/></clipPath>
<path d="M287.7,445.7 C288.4,443 289.4,440.4 290.6,438.1 C292.4,435.8 294.6,434 297.2,432.5 C300.8,431 304.6,430 308.5,429.6 C312.4,429.4 316.2,429.8 319.9,430.6 C322.6,432 324.8,433.8 326.5,436.2 C328.4,439.2 329.6,442.4 330.3,445.7 C330.6,448.6 330.2,451.6 329.4,454.2 C328.6,457.4 327.4,460.2 325.6,462.7 C323.4,464.2 320.8,465.2 318,465.6 L302.9,467.5 L291.5,467.5 C289.2,467 287.2,466 285.8,464.6 C285.6,460.8 286,457 286.8,453.3 Z" fill="#909090"/>
<g clip-path="url(#ffclip)">
<ellipse cx="305" cy="435" rx="16" ry="6" fill="#b0b0b0" opacity="0.8" filter="url(#b2)"/>
<ellipse cx="330" cy="451" rx="5" ry="14" fill="#5c5c5c" opacity="0.7" filter="url(#b2)"/>
<ellipse cx="305" cy="467" rx="20" ry="4" fill="#707070" opacity="0.6" filter="url(#b2)"/>
<ellipse cx="288" cy="455" rx="3" ry="10" fill="#707070" opacity="0.6" filter="url(#b2)"/>
</g>
</g>
<rect x="281.4" y="260" width="1.7" height="48.7" fill="#3a9c6b"/>
<g transform="rotate(33.7 342 419.6)"><ellipse cx="342" cy="419.6" rx="2.7" ry="8.2" fill="#4a4a4a" stroke="#222" stroke-width="2"/><ellipse cx="342" cy="419.6" rx="2.7" ry="8.2" fill="none" stroke="#f6f6f6" stroke-width="0.9"/><circle cx="342" cy="419.6" r="1.5" fill="#f2f2f2"/><path d="M342 412.5 L342 417" stroke="#222" stroke-width="1"/></g>
<rect x="252.6" y="86.4" width="52" height="10.2" rx="1" fill="#1c1c1c" opacity="0.85"/>
<line x1="282.6" y1="85" x2="282.6" y2="98" stroke="#2f8f63" stroke-width="1"/>
<text x="253.6" y="94.6" font-size="7.15" font-weight="bold" fill="#ececec" font-family="Liberation Sans, Noto Sans CJK SC, sans-serif">默认摄像机</text>
<g fill="none" stroke="#a9afc4" stroke-width="0.9"><path d="M295.4 89.6 H298.6 V91.4 M293.6 92.4 H299.6 V95.4 H294.2 Z"/><path d="M299.8 94 L302.4 92.6 V95.2 Z" fill="#a9afc4"/></g>
<text x="628.8" y="93.6" font-size="7" font-weight="bold" fill="#2fae4f" font-family="Liberation Sans, sans-serif">Y</text>
<rect x="630.4" y="97" width="1.8" height="12" fill="#2fae4f"/>
<text x="617.8" y="111" font-size="7.6" font-weight="bold" fill="#2f74d0" font-family="Liberation Sans, sans-serif">Z</text>
<rect x="625" y="108" width="6" height="1" fill="#2f74d0"/>
<rect x="578.4" y="638" width="54" height="8.8" fill="#1c1c1c" opacity="0.7"/>
<text id="gridtxt" x="579.6" y="645.2" font-size="7.3" fill="#d6d6d6" font-family="Liberation Sans, Noto Sans CJK SC, sans-serif">网格间距<tspan id="gridtxt2" font-size="7.7" dx="0.6"> : 0.5 cm</tspan></text>
</svg>
</div>
<div id="vline2" class="abs"></div>
<div id="dark" class="abs"></div>
<div id="task" class="abs">
<svg class="abs" style="left:0;top:0" width="630" height="30" viewBox="2 668 630 30">
<defs>
<linearGradient id="wing" x1="0" y1="0" x2="1" y2="1"><stop offset="0" stop-color="#4fc3f7"/><stop offset="1" stop-color="#0a74d8"/></linearGradient>
<linearGradient id="edgeg" x1="0" y1="0" x2="1" y2="1"><stop offset="0" stop-color="#35c1b1"/><stop offset="0.5" stop-color="#1b9de2"/><stop offset="1" stop-color="#0c59a4"/></linearGradient>
<linearGradient id="wordg" x1="0" y1="0" x2="0" y2="1"><stop offset="0" stop-color="#4fb3f2"/><stop offset="0.5" stop-color="#2b7cd3"/><stop offset="1" stop-color="#1756b0"/></linearGradient>
<linearGradient id="docg" x1="0" y1="0" x2="0" y2="1"><stop offset="0" stop-color="#ffd43a"/><stop offset="1" stop-color="#f7941d"/></linearGradient>
</defs>
<rect x="198.2" y="676.7" width="7.5" height="7.5" rx="0.6" fill="url(#wing)"/>
<rect x="206.5" y="676.7" width="7.5" height="7.5" rx="0.6" fill="url(#wing)"/>
<rect x="198.2" y="685.0" width="7.5" height="7.5" rx="0.6" fill="url(#wing)"/>
<rect x="206.5" y="685.0" width="7.5" height="7.5" rx="0.6" fill="url(#wing)"/>
<rect x="222.6" y="674.6" width="143.6" height="19.2" rx="9.6" fill="#f9f9f9" stroke="#dcdcdc" stroke-width="0.8"/>
<circle cx="234.6" cy="683.6" r="3.1" fill="none" stroke="#333" stroke-width="1.1"/><line x1="236.9" y1="686" x2="239.2" y2="688.4" stroke="#333" stroke-width="1.2" stroke-linecap="round"/>
<text x="246.8" y="687.8" font-size="9.2" fill="#6a6a6a" font-family="Liberation Sans, Noto Sans CJK SC, sans-serif">搜索</text>
<path d="M374.4 678.6 a1 1 0 0 1 1-1 h4.2 l1.6 1.6 h7.6 a1 1 0 0 1 1 1 v10.4 a1 1 0 0 1 -1 1 h-13.4 a1 1 0 0 1 -1-1 Z" fill="#f8c63d"/>
<rect x="374.4" y="680.4" width="15.4" height="11.2" rx="1" fill="#fbd65a"/>
<rect x="376.6" y="686.4" width="11" height="5.2" rx="0.8" fill="#1a7bd4"/>
<clipPath id="edgeclip"><circle cx="411.2" cy="684" r="8"/></clipPath>
<g clip-path="url(#edgeclip)">
<rect x="403" y="676" width="17" height="17" fill="#1565b8"/>
<path d="M403 686 C403 679 408 675.6 412.4 675.8 C417 676 419.6 680 419.4 683.4 C419.2 686.6 416.8 688 414.4 688 C412 688 411 686.6 411.6 685 C412.4 683 411 681.4 409 681.6 C406 682 404.4 684.4 404.6 688 Z" fill="#2fb3e6"/>
<path d="M411 675.8 C416.6 675.6 419.8 680 419.4 683.6 C419.2 686.6 416.8 688 414.4 688 C412.6 688 411.4 687.2 411.4 685.8 C413.6 685 414.4 683 413.6 681 C412.8 678.8 411 677.6 408.6 677.6 C409.2 676.4 410 676 411 675.8 Z" fill="#55d468"/>
<path d="M410.6 676 C414 676 416.6 677.6 417.8 680 C415.8 678.4 412.6 678 410 679.2 C408 680.2 406.8 682 406.6 684 C405 682 405.6 677.4 410.6 676 Z" fill="#36c3d8" opacity="0.9"/>
<ellipse cx="412.4" cy="684.6" rx="1.9" ry="1.7" fill="#f4f8fb"/>
<path d="M404 688 C406 692 412 693.4 417 690 C414 691.4 410 690.6 408 688 Z" fill="#0d4f9a"/>
</g>
<circle cx="407" cy="688.6" r="3.3" fill="#dcdcdc"/><circle cx="407" cy="687.5" r="1.25" fill="#8c8c8c"/><path d="M404.8 690.9 a2.2 1.9 0 0 1 4.4 0 Z" fill="#8c8c8c"/>
<circle cx="440" cy="684" r="8" fill="#fbbc05"/>
<path d="M433.07 680.00 A8 8 0 0 1 446.93 680.00 L440 684 Z" fill="#ea4335"/>
<path d="M433.07 680.00 A8 8 0 0 0 440.00 692.00 L440 684 Z" fill="#34a853"/>
<path d="M433.07 680.00 A8 8 0 0 1 447.90 683.00 L443.60 683.00 L440 684 Z" fill="#ea4335"/>
<circle cx="440" cy="684" r="3.7" fill="#fff"/><circle cx="440" cy="684" r="2.9" fill="#4285f4"/>
<rect x="461" y="676.4" width="15.8" height="15.6" rx="3" fill="#1ec45c"/>
<ellipse cx="467.2" cy="682.8" rx="3.6" ry="3" fill="#fff"/><ellipse cx="471.4" cy="685.8" rx="3.2" ry="2.7" fill="#fff" stroke="#1ec45c" stroke-width="0.6"/>
<circle cx="466" cy="682.2" r="0.5" fill="#1ec45c"/><circle cx="468.4" cy="682.2" r="0.5" fill="#1ec45c"/><circle cx="470.4" cy="685.4" r="0.45" fill="#1ec45c"/><circle cx="472.4" cy="685.4" r="0.45" fill="#1ec45c"/>
<clipPath id="wordclip"><rect x="492" y="676.4" width="12" height="15" rx="1.6"/></clipPath>
<g clip-path="url(#wordclip)"><rect x="492" y="676.4" width="12" height="5.8" fill="#38c4f6"/><rect x="492" y="682" width="12" height="4.8" fill="#2492ee"/><rect x="492" y="686.6" width="12" height="5" fill="#1048c6"/></g>
<rect x="489.8" y="683" width="6.8" height="6.6" rx="1" fill="#1b40b4"/>
<text x="493.2" y="688.5" font-size="5.4" font-weight="bold" text-anchor="middle" fill="#fff" font-family="Liberation Sans, sans-serif">W</text>
<circle cx="530.2" cy="679.6" r="2" fill="#6a78ea"/><circle cx="524.2" cy="677.8" r="2.5" fill="#5a67e0"/>
<path d="M520.6 681.8 h9 v5.6 a4.4 4.4 0 0 1 -8.6 0.6 Z" fill="#4d5ad6"/><path d="M528.6 682.4 h4.8 v4.2 a3 3 0 0 1 -4.8 1.8 Z" fill="#6a78ea"/>
<rect x="519" y="683" width="6.2" height="6.8" rx="0.9" fill="#3a40b2"/>
<text x="522.1" y="688.6" font-size="5.4" font-weight="bold" text-anchor="middle" fill="#fff" font-family="Liberation Sans, sans-serif">T</text>
<circle cx="530.4" cy="687.2" r="3.2" fill="#f8edc2"/><path d="M529.4 688.4 l1.8 -2.2 M530 686 h1.4 v1.4" fill="none" stroke="#7a7460" stroke-width="0.5"/>
<rect x="547.5" y="676.1" width="15.8" height="15.2" rx="3.2" fill="#f0263c"/>
<text x="555.4" y="687.4" font-size="10.4" text-anchor="middle" fill="#fff" font-family="Liberation Sans, sans-serif" letter-spacing="-0.3" stroke="#fff" stroke-width="0.25">yd</text>
<path d="M578 680.2 L582.7 688.4 L585.5 683.6 L588.2 688.4 L591.6 680.2" fill="none" stroke="#ec3324" stroke-width="2.3" stroke-linejoin="miter"/>
<path d="M576.8 680.2 H587.4" stroke="#f04a2a" stroke-width="2"/>
<rect x="616.4" y="679.4" width="5.2" height="10.6" rx="1" fill="#d6246e"/>
<rect x="608" y="676.4" width="11" height="13.6" rx="1.4" fill="url(#docg)"/>
<rect x="610" y="679.6" width="7" height="0.9" fill="#f07c1a"/>
<rect x="610" y="682.2" width="7" height="0.9" fill="#f07c1a"/>
<rect x="610" y="684.8" width="7" height="0.9" fill="#f07c1a"/>
<circle cx="608.6" cy="687.4" r="2.6" fill="#cfefff" stroke="#e0337c" stroke-width="1.1"/><line x1="610.6" y1="689.6" x2="612.4" y2="691.4" stroke="#e0337c" stroke-width="1.2" stroke-linecap="round"/>
<rect x="380.0" y="694.8" width="4" height="1.5" rx="0.7" fill="#8e8e8e"/>
<rect x="409.2" y="694.8" width="4" height="1.5" rx="0.7" fill="#8e8e8e"/>
<rect x="438.0" y="694.8" width="4" height="1.5" rx="0.7" fill="#8e8e8e"/>
<rect x="611.2" y="694.8" width="4" height="1.5" rx="0.7" fill="#8e8e8e"/>
</svg>
</div>
</div>
</body>
</html>
